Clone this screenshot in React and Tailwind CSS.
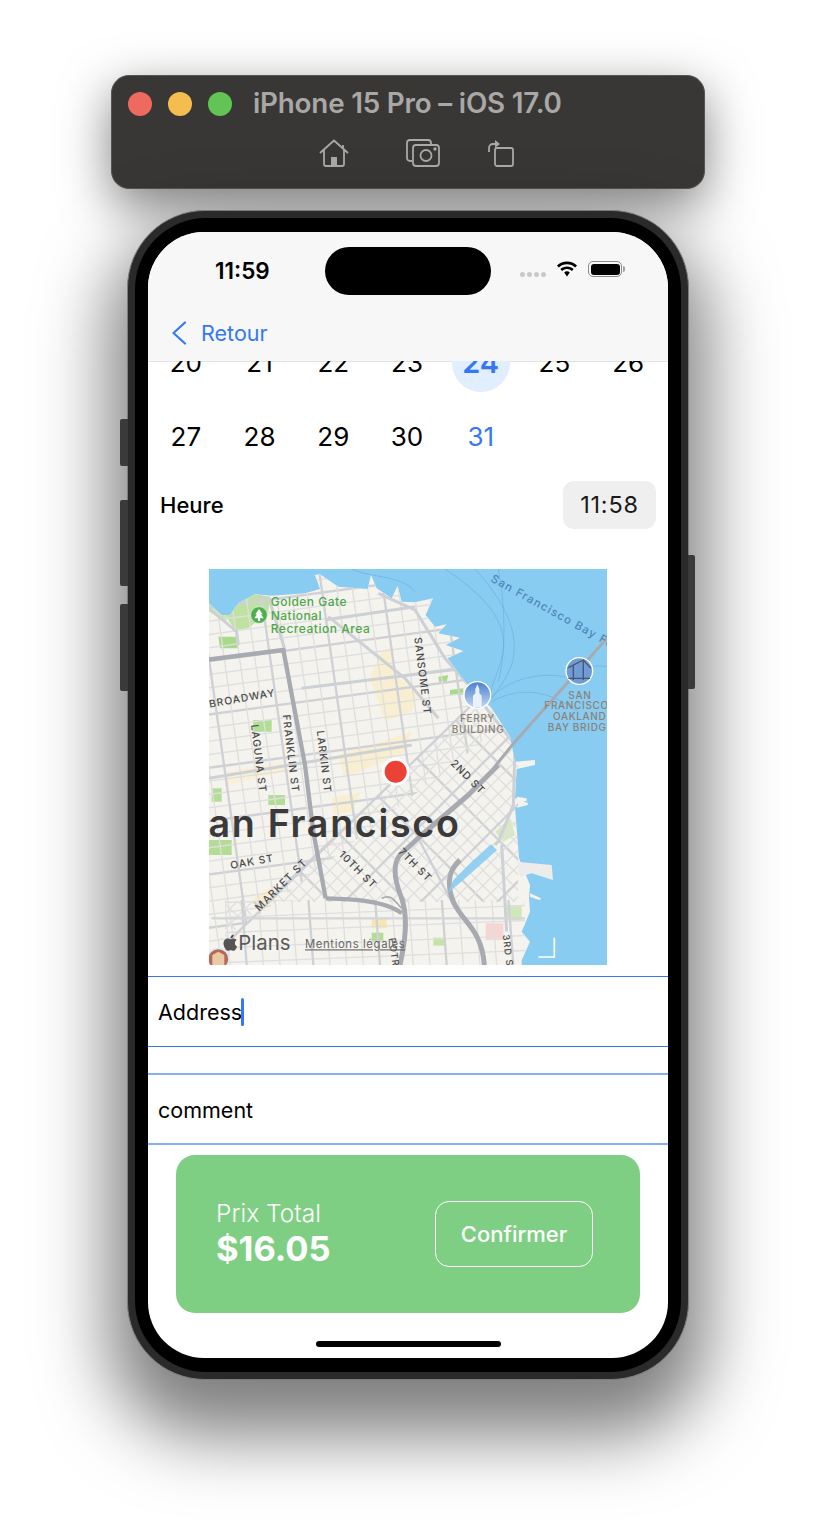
import { FaApple } from 'react-icons/fa'

const weeks = [
  [20, 21, 22, 23, 24, 25, 26],
  [27, 28, 29, 30, 31],
]

// street grids for the map, in 3x map units
const range = (from, to, step) => {
  const out = []
  for (let v = from; v <= to; v += step) out.push(v)
  return out
}
const eastWest = range(40, 1240, 40).map((y, i) => ({ x1: 0, y1: y + 50, x2: 1000, y2: y - 85, major: i % 4 === 1 }))
const northSouth = range(-120, 900, 46).map((x, i) => ({ x1: x, y1: 0, x2: x + 170, y2: 1200, major: i % 4 === 2 }))
const diagA = range(-200, 1900, 46).map((c, i) => ({ x1: c - 1000, y1: 400, x2: c, y2: 1400, major: i % 5 === 1 }))
const diagB = range(600, 2400, 46).map((c, i) => ({ x1: 0, y1: c, x2: 1200, y2: c - 1200, major: i % 5 === 3 }))

function Streets({ lines }) {
  return lines.map((l, i) => (
    <line key={i} x1={l.x1} y1={l.y1} x2={l.x2} y2={l.y2} stroke={l.major ? '#cfd1d5' : '#dedfde'} strokeWidth={l.major ? 7 : 4} />
  ))
}

function Label({ x, y, rotate = 0, size = 31, fill = '#4b4b4b', spacing = 3, weight = 500, children }) {
  return (
    <text x={x} y={y} fontSize={size} fill={fill} fontWeight={weight} letterSpacing={spacing} transform={`rotate(${rotate} ${x} ${y})`}>
      {children}
    </text>
  )
}

const LAND =
  'M0 105L50 150L75 150L100 115L150 88L200 92L300 85L345 72L330 30L345 28L400 65L488 72L498 30L515 70L560 100L578 62L590 110L630 112L684 100L662 150L690 185L725 178L700 205L765 218L722 240L775 258L728 280L780 350L860 430L915 515L930 590L990 585L990 600L935 612L930 700L965 712L930 726L942 880L975 960L972 1000L975 1040L950 1100L975 1130L950 1186L950 1200L0 1200Z'

function MapView() {
  return (
    <svg viewBox="12 12 1194 1188" className="w-[398px] h-[396px] mx-auto mt-10 font-[Inter] shrink-0">
      <defs>
        <clipPath id="land"><path d={LAND} /></clipPath>
        <clipPath id="north"><path d="M0 0H1000V400L60 1130L0 1200Z" /></clipPath>
        <clipPath id="south"><path d="M60 1125L800 420L940 540V1010H60Z" /></clipPath>
        <clipPath id="mission"><path d="M60 1005H960V1200H60Z" /></clipPath>
        <linearGradient id="poi" x1="0" y1="0" x2="0" y2="1">
          <stop offset="0" stopColor="#4a7fd0" />
          <stop offset="1" stopColor="#c6d9f2" />
        </linearGradient>
      </defs>

      <rect x="0" y="0" width="1300" height="1300" fill="#89ccf2" />

      {/* ferry routes */}
      <g fill="none" stroke="#6caedb" strokeWidth="2">
        <path d="M720 12C840 90 920 180 890 280C870 350 850 380 860 395" />
        <path d="M810 12C890 100 950 200 920 300C900 350 880 370 862 400" />
        <path d="M880 12C900 120 905 250 880 350" />
        <path d="M860 395C930 330 1030 320 1100 340" />
        <path d="M860 410C950 360 1040 380 1120 440" />
        <path d="M440 12C500 40 590 30 630 80" />
        <path d="M1160 305C1180 300 1200 305 1210 305" />
      </g>

      <path d={LAND} fill="#f5f3ee" />
      <path d="M935 890L1040 900L1044 945L980 925L945 935Z" fill="#ececea" />
      <path d="M975 985L1008 1000L1004 1006L975 995Z" fill="#f5f3ee" />
      <path d="M935 695L965 700L965 708L935 708ZM935 720L968 712L968 720L935 728Z" fill="#f5f3ee" />

      <g clipPath="url(#land)">
        {/* parks and tints */}
        <path d="M60 150L100 115L150 88L195 95L190 140L130 190L90 195Z" fill="#bfe2a3" />
        <path d="M12 105L50 150L75 152L60 170L12 140Z" fill="#cbe7b3" />
        <path d="M525 265L560 245L575 330L640 390L620 440L540 470L495 340Z" fill="#f9efd0" />
        <path d="M400 570L620 500L600 560L420 640Z" fill="#f9efd0" />
        <path d="M60 620L230 590L240 620L70 660Z" fill="#f8f0d8" />
        <path d="M380 700L470 680L440 740L385 750Z" fill="#f9efd0" />
        <path d="M140 1000L190 970L230 980L180 1040Z" fill="#f9efd0" />
        <path d="M40 215H100V250H45Z" fill="#a9d98a" />
        <path d="M145 465H200V500H145Z" fill="#b2dd95" />
        <path d="M20 670H50V710H20Z" fill="#b2dd95" />
        <path d="M190 690H240V720H190Z" fill="#b2dd95" />
        <path d="M12 825H80V870H12Z" fill="#b2dd95" />
        <path d="M500 1103H535V1128H500Z" fill="#b2dd95" />
        <path d="M685 1118H722V1142H685Z" fill="#c2e4a7" />
        <path d="M905 1020H950V1065H905Z" fill="#cfe8b9" />
        <path d="M870 800L915 760L930 810L895 830Z" fill="#d6e8c0" />
        <path d="M500 1060H545V1090H500Z" fill="#f8e6b0" />
        <path d="M842 1075H895V1125H842Z" fill="#f6d6d2" />
        <path d="M700 335L730 330L725 350L702 350Z" fill="#a9d98a" />
        <path d="M735 375L775 370L775 390L735 390Z" fill="#a9d98a" />

        <g clipPath="url(#north)">
          <Streets lines={eastWest} />
          <Streets lines={northSouth} />
        </g>
        <g clipPath="url(#south)">
          <Streets lines={diagA} />
          <Streets lines={diagB} />
        </g>
        <g clipPath="url(#mission)">
          <Streets lines={range(1005, 1200, 45).map((y) => ({ x1: 0, y1: y + 10, x2: 1000, y2: y - 30, major: false }))} />
          <Streets lines={range(60, 960, 50).map((x, i) => ({ x1: x, y1: 1000, x2: x + 15, y2: 1200, major: i % 4 === 1 }))} />
        </g>

        {/* main avenues */}
        <g fill="none" stroke="#cdd0d5" strokeWidth="9">
          <path d="M12 130L95 200L100 240" />
          <path d="M190 95L240 255" />
          <path d="M370 155L600 340L700 460" />
          <path d="M360 165L630 125" />
          <path d="M520 85L630 135L720 280L790 360L930 540L925 720L880 830L870 840" />
          <path d="M290 370L780 310" />
          <path d="M12 640L620 540" />
          <path d="M890 840L905 1100" />
          <path d="M80 1120L800 420" strokeWidth="7" />
          <path d="M20 1060H960" strokeWidth="7" stroke="#d3d5d8" />
          <path d="M640 820L750 1030" strokeWidth="7" />
        </g>

        {/* freeways */}
        <g fill="none" stroke="#a8aab1" strokeLinejoin="round" strokeLinecap="butt">
          <path d="M0 285L235 255L300 600L325 800L362 1000" strokeWidth="13" />
          <path d="M362 1000C430 1002 540 1005 590 1045" strokeWidth="13" />
          <path d="M530 1000C560 985 570 1010 590 1030" strokeWidth="5" />
          <path d="M880 600L790 690L650 810L585 870C560 900 570 950 590 1000C610 1060 600 1130 585 1200" strokeWidth="15" />
          <path d="M765 885C730 915 725 960 745 1010C770 1070 830 1090 838 1200" strokeWidth="15" />
        </g>
      </g>
      <path d="M1210 215L930 530L865 610" fill="none" stroke="#a8aab1" strokeWidth="9" />
      <path d="M728 985C770 950 820 905 876 855L858 838L800 890L745 945Z" fill="#89ccf2" opacity="0.9" />

      {/* park label */}
      <circle cx="162" cy="150" r="25" fill="#4caf50" stroke="#e7f3dd" strokeWidth="2" />
      <path d="M162 132L173 148H168L176 160H165V168H159V160H148L156 148H151Z" fill="#fff" />
      <Label x={197} y={124} size={36} fill="#4ea84a" spacing={1.5}>Golden Gate</Label>
      <Label x={197} y={164} size={36} fill="#4ea84a" spacing={1.5}>National</Label>
      <Label x={197} y={203} size={36} fill="#4ea84a" spacing={1.6}>Recreation Area</Label>

      <Label x={855} y={48} rotate={29} size={34} fill="#4f86b8" spacing={3.5}>San Francisco Bay Ferry</Label>

      {/* points of interest */}
      <circle cx="817" cy="390" r="40" fill="url(#poi)" stroke="#fff" strokeWidth="4" />
      <path d="M817 358L823 372V385L830 392V426H804V392L811 385V372Z" fill="#e9f1fb" />
      <Label x={765} y={472} size={30} fill="#8a8277" spacing={2}>FERRY</Label>
      <Label x={740} y={503} size={30} fill="#8a8277" spacing={2}>BUILDING</Label>

      <circle cx="1123" cy="318" r="40" fill="#6f9bd6" stroke="#fff" strokeWidth="4" />
      <path d="M1090 308L1135 285L1158 310M1105 300V345M1135 285V345M1090 340H1155" stroke="#46586e" strokeWidth="4" fill="none" />
      <Label x={1090} y={402} size={30} fill="#8a8277" spacing={2}>SAN</Label>
      <Label x={1018} y={433} size={30} fill="#8a8277" spacing={2}>FRANCISCO</Label>
      <Label x={1044} y={465} size={30} fill="#8a8277" spacing={2}>OAKLAND</Label>
      <Label x={1028} y={497} size={30} fill="#8a8277" spacing={2}>BAY BRIDGE</Label>

      {/* street names */}
      <Label x={14} y={428} rotate={-10}>BROADWAY</Label>
      <Label x={628} y={218} rotate={83}>SANSOME ST</Label>
      <Label x={233} y={450} rotate={83}>FRANKLIN ST</Label>
      <Label x={138} y={480} rotate={83}>LAGUNA ST</Label>
      <Label x={335} y={498} rotate={83}>LARKIN ST</Label>
      <Label x={735} y={597} rotate={45}>2ND ST</Label>
      <Label x={78} y={912} rotate={-10}>OAK ST</Label>
      <Label x={163} y={1040} rotate={-45}>MARKET ST</Label>
      <Label x={400} y={870} rotate={45}>10TH ST</Label>
      <Label x={578} y={862} rotate={45}>7TH ST</Label>
      <Label x={552} y={1120} rotate={83} size={28}>POTRERO</Label>
      <Label x={893} y={1110} rotate={83} size={28}>3RD ST</Label>

      <text x="-68" y="815" fontSize="113" fontWeight="600" fill="#3a3a3a" letterSpacing="5">San Francisco</text>

      {/* pin */}
      <circle cx="572" cy="620" r="42" fill="#fff" />
      <circle cx="572" cy="620" r="33" fill="#ea4335" />

      {/* attribution */}
      <circle cx="40" cy="1182" r="32" fill="#b5694e" stroke="#dce8f8" strokeWidth="5" />
      <path d="M22 1200V1170L40 1160L58 1170V1200Z" fill="#e9c9a8" />
      <FaApple x={48} y={1105} size={56} color="#555" />
      <text x="100" y="1155" fontSize="61" fill="#5a5a5a">Plans</text>
      <text x="300" y="1150" fontSize="34" fill="#666" letterSpacing="1.8" textDecoration="underline">Mentions légales</text>
      <path d="M1048 1118V1176H1000" fill="none" stroke="#fff" strokeWidth="5" />
    </svg>
  )
}

function WindowBar() {
  return (
    <div className="w-[594px] h-[114px] shrink-0 rounded-[18px] bg-[#383735] border border-[#55544f] shadow-[0_16px_50px_rgba(0,0,0,0.5)] flex flex-col">
      <div className="flex items-center h-[54px] mt-[1px] pl-[16px]">
        <span className="w-6 h-6 rounded-full bg-[#ee6a5f]" />
        <span className="w-6 h-6 rounded-full bg-[#f5bd4f] ml-4" />
        <span className="w-6 h-6 rounded-full bg-[#61c454] ml-4" />
        <span className="ml-[21px] text-[27.8px] font-semibold text-[#a9a8a6] tracking-[-0.2px]">iPhone 15 Pro – iOS 17.0</span>
      </div>
      <div className="flex items-start mt-[8px] pl-[207px] text-[#aaa9a7]">
        <svg viewBox="0 0 30 28" className="w-[30px] h-[28px]" fill="none" stroke="currentColor" strokeWidth="1.8">
          <path d="M1 14L15 1.5L29 14M24 6V10.5M5 11V25a2 2 0 0 0 2 2H23a2 2 0 0 0 2-2V11" />
          <rect x="12" y="18" width="6" height="9" fill="currentColor" stroke="none" />
        </svg>
        <svg viewBox="0 0 34 28" className="w-[34px] h-[28px] ml-[57px]" fill="none" stroke="currentColor" strokeWidth="1.8">
          <path d="M6 22H4a3 3 0 0 1-3-3V4a3 3 0 0 1 3-3H22a3 3 0 0 1 3 3V5" />
          <rect x="7" y="6" width="26" height="21" rx="3" />
          <circle cx="20" cy="16.5" r="5.5" />
          <circle cx="29" cy="10" r="0.8" fill="currentColor" />
        </svg>
        <svg viewBox="0 0 28 28" className="w-[28px] h-[28px] ml-[47px]" fill="none" stroke="currentColor" strokeWidth="1.8">
          <rect x="8" y="10" width="18" height="18" rx="2" transform="translate(0 -1)" />
          <path d="M2 13V9a4 4 0 0 1 4-4H8" />
          <path d="M8 1L13 5L8 9Z" fill="currentColor" stroke="none" />
        </svg>
      </div>
    </div>
  )
}

function StatusIcons() {
  return (
    <div className="flex items-center absolute right-[43px] top-[29px]">
      <div className="flex gap-[2px] mt-[10px] mr-[10px]">
        <span className="w-[5px] h-[5px] rounded-full bg-[#c9c9c9]" />
        <span className="w-[5px] h-[5px] rounded-full bg-[#c9c9c9]" />
        <span className="w-[5px] h-[5px] rounded-full bg-[#c9c9c9]" />
        <span className="w-[5px] h-[5px] rounded-full bg-[#c9c9c9]" />
      </div>
      <svg viewBox="0 0 22 16" className="w-[22px] h-[16px]" fill="#000">
        <path d="M11 3.2C14.2 3.2 17 4.4 19.2 6.5L21 4.6C18.4 2 14.9.5 11 .5S3.6 2 1 4.6L2.8 6.5C5 4.4 7.8 3.2 11 3.2Z" />
        <path d="M11 8c1.9 0 3.6.8 4.9 2l1.8-1.9C16 6.4 13.6 5.4 11 5.4S6 6.4 4.3 8.1L6.1 10C7.4 8.8 9.1 8 11 8Z" />
        <path d="M11 10.3c-1.1 0-2 .4-2.8 1.1L11 15.5l2.8-4.1C13 10.7 12.1 10.3 11 10.3Z" />
      </svg>
      <div className="flex items-center ml-[10px]">
        <div className="w-[34px] h-[16px] rounded-[5px] border border-[#8b8b8b] p-[1.5px]">
          <div className="w-full h-full rounded-[3px] bg-black" />
        </div>
        <span className="w-[2px] h-[6px] rounded-r-sm bg-[#a0a0a0] ml-[1px]" />
      </div>
    </div>
  )
}

export default function App() {
  return (
    <div className="w-[816px] h-[1530px] bg-white flex flex-col items-center pt-[75px] overflow-hidden font-[Inter] text-black">
      <WindowBar />

      {/* Phone */}
      <div className="relative w-[562px] h-[1170px] mt-[21px] shrink-0 rounded-[78px] bg-[#2a2a2a] border border-[#7c7c7c] shadow-[0_38px_70px_18px_rgba(0,0,0,0.5)] p-[7px]">
        <span className="absolute left-[-8px] top-[208px] w-[8px] h-[47px] rounded-l-[2px] bg-[#3a3a3a]" />
        <span className="absolute left-[-8px] top-[289px] w-[8px] h-[86px] rounded-l-[2px] bg-[#3a3a3a]" />
        <span className="absolute left-[-8px] top-[393px] w-[8px] h-[87px] rounded-l-[2px] bg-[#3a3a3a]" />
        <span className="absolute right-[-7px] top-[344px] w-[7px] h-[134px] rounded-r-[2px] bg-[#3a3a3a]" />

        <div className="w-full h-full rounded-[71px] bg-black pt-[14px] px-[13px]">
          {/* Screen */}
          <div className="relative w-[520px] h-[1126px] rounded-[56px] bg-white overflow-hidden flex flex-col">
            <div className="h-[130px] shrink-0 bg-[#f7f7f7] border-b border-[#e3e3e3] flex flex-col">
              <div className="h-[87px] pl-[67px] pt-[24px] text-[22.5px] font-semibold leading-[30px]">11:59</div>
              <div className="flex items-center pl-[23px] text-[#3478f6]">
                <svg viewBox="0 0 16 24" className="w-4 h-6" fill="none" stroke="currentColor" strokeWidth="2.2" strokeLinecap="round" strokeLinejoin="round">
                  <path d="M14 1.5L2.5 12L14 22.5" />
                </svg>
                <span className="ml-[14px] text-[21.5px] leading-[28px]">Retour</span>
              </div>
            </div>

            <span className="absolute left-[177px] top-[15px] w-[166px] h-[48px] rounded-full bg-black" />
            <StatusIcons />

            {/* Calendar, scrolled under the nav bar */}
            <div className="h-[112px] shrink-0 overflow-hidden flex flex-col justify-end pl-[1px] pr-[3px] -mt-[1px]">
              {weeks.map((week) => (
                <div key={week[0]} className="grid grid-cols-7 h-[74px] shrink-0">
                  {week.map((day) => {
                    if (day === 24) {
                      return (
                        <div key={day} className="flex items-center justify-center">
                          <span className="w-[58px] h-[58px] mt-[1px] rounded-full bg-[#e1eefe] flex items-center justify-center text-[#3478f6] text-[29px] font-semibold">{day}</span>
                        </div>
                      )
                    }
                    return (
                      <div key={day} className={day === 31 ? 'flex items-center justify-center text-[26px] text-[#3478f6]' : 'flex items-center justify-center text-[26px]'}>
                        {day}
                      </div>
                    )
                  })}
                </div>
              ))}
            </div>

            <div className="flex items-center justify-between h-[48px] shrink-0 mt-[8px] px-3">
              <span className="text-[22px] font-medium">Heure</span>
              <span className="w-[93px] h-[48px] rounded-[11px] bg-[#efefef] flex items-center justify-center text-[23.5px] tracking-[0.8px] text-[#1a1a1a]">11:58</span>
            </div>

            <MapView />

            <div className="h-[71px] mt-[11px] pt-[1px] shrink-0 border-y border-[#3478f6] flex items-center pl-[10px] text-[21.5px]">
              Address
              <span className="w-[3px] h-[28px] rounded-full bg-[#3478f6] ml-[-1px]" />
            </div>
            <div className="h-[72px] mt-[26px] pt-[2px] shrink-0 border-y-2 border-[#86aefa] flex items-center pl-[10px] text-[21.5px]">comment</div>

            <div className="w-[464px] h-[158px] shrink-0 mt-[10px] ml-[28px] rounded-[19px] bg-[#7ecf84] flex items-center justify-between pl-[40px] pr-[47px] text-white">
              <div className="flex flex-col -mt-[1px]">
                <span className="text-[24.5px] font-light leading-[30px]">Prix Total</span>
                <span className="text-[34.5px] font-bold leading-[41px]">$16.05</span>
              </div>
              <div className="w-[158px] h-[66px] rounded-[14px] border border-white flex items-center justify-center text-[22px] font-medium">Confirmer</div>
            </div>

            <div className="w-[185px] h-[6px] mt-[28px] mx-auto shrink-0 rounded-full bg-black" />
          </div>
        </div>
      </div>
    </div>
  )
}
